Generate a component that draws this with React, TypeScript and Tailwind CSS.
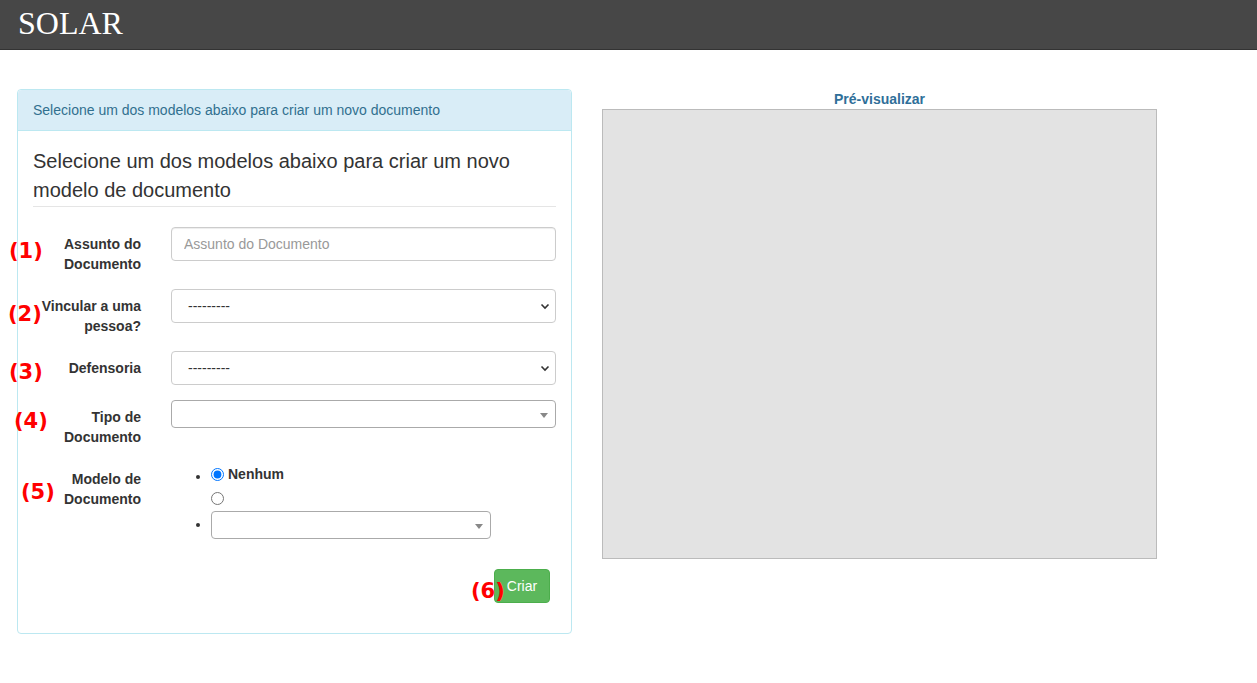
import React from "react";

function Chevron() {
    return (
        <svg width="10" height="10" viewBox="0 0 10 10" className="absolute right-[6px] top-1/2 -translate-y-1/2 pointer-events-none">
            <path d="M1.5 3.5 L5 7 L8.5 3.5" fill="none" stroke="#333" strokeWidth="1.6"/>
        </svg>
    );
}

function Select2({className}: {className: string}) {
    return (
        <div className={"relative h-[28px] border border-[#aaa] rounded bg-white " + className}>
            <span className="absolute right-[7px] top-[12px] w-0 h-0 border-l-[4px] border-r-[4px] border-t-[5px] border-l-transparent border-r-transparent border-t-[#888]"/>
        </div>
    );
}

function Mark({text, className}: {text: string; className: string}) {
    return (
        <span className={"absolute text-[#ff0000] font-bold text-[21px] leading-none font-['DejaVu_Sans',sans-serif] " + className}>{text}</span>
    );
}

export default function App() {
    return (
        <div className="relative min-h-[683px] bg-white font-['Liberation_Sans',Arial,sans-serif] text-[14px] text-[#333]">
            <div className="h-[50px] bg-[#474747] border-b border-[#333] px-[18px] flex items-center">
                <span className="text-white text-[32px] font-['Liberation_Serif',serif] leading-none pb-[4px]">SOLAR</span>
            </div>

            <div className="flex pt-[39px]">
                <div className="ml-[17px] w-[555px] h-[545px] border border-[#bce8f1] rounded bg-white">
                    <div className="h-[41px] bg-[#d9edf7] border-b border-[#bce8f1] text-[#31708f] px-[15px] flex items-center rounded-t">
                        Selecione um dos modelos abaixo para criar um novo documento
                    </div>
                    <div className="p-[15px]">
                        <h3 className="text-[20px] leading-[29px] text-[#333] pt-px">
                            Selecione um dos modelos abaixo para criar um novo modelo de documento
                        </h3>
                        <hr className="mt-[1px] mb-[20px] border-t border-[#e5e5e5]"/>

                        <div className="flex mb-[15px]">
                            <label className="w-[138px] pr-[30px] pt-[7px] text-right font-bold leading-[20px]">Assunto do Documento</label>
                            <input placeholder="Assunto do Documento" className="w-[385px] h-[34px] border border-[#ccc] rounded px-[12px] placeholder:text-[#999] shadow-[inset_0_1px_1px_rgba(0,0,0,0.075)]"/>
                        </div>

                        <div className="flex mb-[15px]">
                            <label className="w-[138px] pr-[30px] pt-[7px] text-right font-bold leading-[20px]">Vincular a uma pessoa?</label>
                            <div className="relative w-[385px] h-[34px]">
                                <select className="appearance-none w-full h-full border border-[#ccc] rounded px-[16px] bg-white">
                                    <option>---------</option>
                                </select>
                                <Chevron/>
                            </div>
                        </div>

                        <div className="flex mb-[15px]">
                            <label className="w-[138px] pr-[30px] pt-[7px] text-right font-bold leading-[20px]">Defensoria</label>
                            <div className="relative w-[385px] h-[34px]">
                                <select className="appearance-none w-full h-full border border-[#ccc] rounded px-[16px] bg-white">
                                    <option>---------</option>
                                </select>
                                <Chevron/>
                            </div>
                        </div>

                        <div className="flex mb-[15px] h-[47px]">
                            <label className="w-[138px] pr-[30px] pt-[7px] text-right font-bold leading-[20px]">Tipo de Documento</label>
                            <Select2 className="w-[385px]"/>
                        </div>

                        <div className="flex">
                            <label className="w-[138px] pr-[30px] pt-[7px] text-right font-bold leading-[20px]">Modelo de Documento</label>
                            <ul className="list-disc pl-[40px] pt-[2px] mb-[30px]">
                                <li className="leading-[20px]">
                                    <label className="flex items-center gap-[4px] font-bold">
                                        <input type="radio" name="modelo" defaultChecked className="m-0 w-[13px] h-[13px] accent-[#0075ff]"/>
                                        Nenhum
                                    </label>
                                </li>
                                <li className="leading-[20px] list-none mt-[4px] flex items-center h-[20px]">
                                    <input type="radio" name="modelo" className="m-0 w-[13px] h-[13px]"/>
                                </li>
                                <li className="mt-[3px]">
                                    <Select2 className="w-[280px] inline-block align-middle"/>
                                </li>
                            </ul>
                        </div>

                        <div className="flex justify-end pr-[6px]">
                            <button className="w-[56px] h-[34px] bg-[#5cb85c] border border-[#4cae4c] rounded text-white">Criar</button>
                        </div>
                    </div>
                </div>

                <div className="ml-[30px] w-[555px] flex flex-col items-center">
                    <div className="text-[#2f6f99] font-bold leading-[20px]">Pré-visualizar</div>
                    <div className="w-[555px] h-[450px] bg-[#e3e3e3] border border-[#bbb]"/>
                </div>
            </div>

            <Mark text="(1)" className="left-[9px] top-[241px]"/>
            <Mark text="(2)" className="left-[8px] top-[304px]"/>
            <Mark text="(3)" className="left-[9px] top-[362px]"/>
            <Mark text="(4)" className="left-[14px] top-[411px]"/>
            <Mark text="(5)" className="left-[21px] top-[482px]"/>
            <Mark text="(6)" className="left-[471px] top-[581px]"/>
        </div>
    );
}
